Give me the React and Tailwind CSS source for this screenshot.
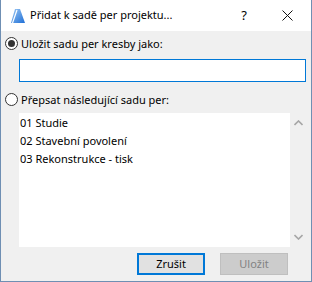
import React from 'react'

const font = { fontFamily: '"Noto Sans", "Open Sans", sans-serif' }

function Radio({ checked, label }) {
  return (
    <div className="flex items-center h-[13px]">
      <span className="w-[13px] h-[13px] rounded-full border border-[#333] bg-white flex items-center justify-center shrink-0">
        {checked && <span className="w-[7px] h-[7px] rounded-full bg-[#333]" />}
      </span>
      <span className="ml-[3px] text-[11px] leading-[13px] text-black whitespace-nowrap">{label}</span>
    </div>
  )
}

function AppIcon() {
  return (
    <svg width="14" height="16" viewBox="0 0 14 16" className="shrink-0">
      <defs>
        <linearGradient id="ag" x1="0" y1="0" x2="1" y2="1">
          <stop offset="0" stopColor="#9cc8f4" />
          <stop offset="1" stopColor="#1f6fd6" />
        </linearGradient>
      </defs>
      <polygon points="0,15 4,1 9,1 14,15" fill="url(#ag)" />
      <line x1="1.5" y1="15" x2="6" y2="2" stroke="#ffffff" strokeWidth="1.2" />
    </svg>
  )
}

const items = ['01 Studie', '02 Stavební povolení', '03 Rekonstrukce - tisk']

export default function App() {
  return (
    <div className="w-[312px] h-[282px] flex flex-col bg-[#f0f0f0] border border-[#6f8fb3] border-t-0" style={font}>
      <div className="h-[31px] bg-white flex items-center shrink-0">
        <div className="ml-[10px] mt-[1px]"><AppIcon /></div>
        <span className="ml-[5px] text-[11px] text-black whitespace-nowrap">Přidat k sadě per projektu...</span>
        <span className="ml-auto mr-[35px] text-[13px] text-black">?</span>
        <svg width="11" height="11" viewBox="0 0 11 11" className="mr-[18px]">
          <path d="M0.5 0.5 L10.5 10.5 M10.5 0.5 L0.5 10.5" stroke="#111" strokeWidth="1" />
        </svg>
      </div>

      <div className="flex flex-col flex-1 pl-[4px] pr-[5px] pt-[6px] pb-[6px]">
        <Radio checked label="Uložit sadu per kresby jako:" />
        <div className="ml-[14px] mt-[9px] h-[23px] bg-white border border-[#0078d7]" />
        <div className="mt-[11px]">
          <Radio label="Přepsat následující sadu per:" />
        </div>
        <div className="ml-[14px] mt-[7px] h-[134px] bg-white flex">
          <div className="flex-1 pt-[1px] pl-[1px]">
            {items.map((t) => (
              <div key={t} className="h-[18px] flex items-center text-[11px] text-black whitespace-nowrap">{t}</div>
            ))}
          </div>
          <div className="w-[16px] bg-[#f0f0f0] flex flex-col items-center justify-between py-[7px]">
            <svg width="9" height="6" viewBox="0 0 9 6">
              <path d="M0.5 5 L4.5 1 L8.5 5" fill="none" stroke="#a6a6a6" strokeWidth="1.6" />
            </svg>
            <svg width="9" height="6" viewBox="0 0 9 6">
              <path d="M0.5 1 L4.5 5 L8.5 1" fill="none" stroke="#a6a6a6" strokeWidth="1.6" />
            </svg>
          </div>
        </div>
        <div className="mt-auto flex justify-end gap-[15px] mr-[18px]">
          <button className="w-[68px] h-[22px] border-2 border-[#0078d7] bg-[#e1e1e1] text-[11px] text-black">Zrušit</button>
          <button className="w-[68px] h-[22px] border border-[#bfbfbf] bg-[#cccccc] text-[11px] text-[#838383]">Uložit</button>
        </div>
      </div>
    </div>
  )
}
